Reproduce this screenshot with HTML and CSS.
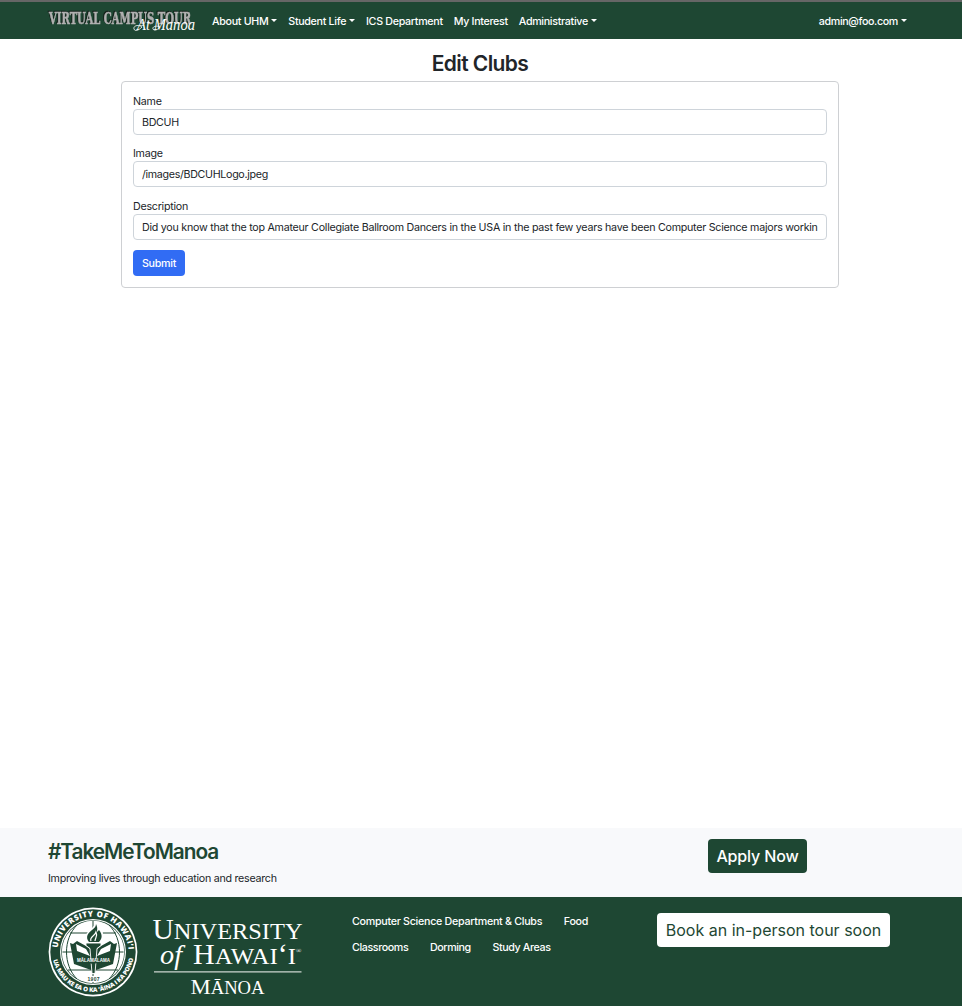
FILE: index.html
```html
<!DOCTYPE html>
<html lang="en">
<head>
<meta charset="utf-8">
<title>Edit Clubs</title>
<link rel="stylesheet" href="styles.css">
</head>
<body>
<header class="navbar">
  <svg class="brand" width="150" height="26" viewBox="0 0 150 26" role="img" aria-label="Virtual Campus Tour At Manoa">
    <text class="brand-block" x="1" y="15.6" textLength="142" lengthAdjust="spacingAndGlyphs">VIRTUAL CAMPUS TOUR</text>
    <text class="brand-script" x="89" y="22.3" textLength="58" lengthAdjust="spacingAndGlyphs">At Manoa</text>
    <path class="brand-swash" d="M94 19c-4-3-9-1-8 2s5 1 8-2M112 19c-4-2-8 0-7 2s4 1 6-1"/>
  </svg>
  <nav class="links">
    <a class="link caret">About UHM</a>
    <a class="link caret">Student Life</a>
    <a class="link">ICS Department</a>
    <a class="link">My Interest</a>
    <a class="link caret">Administrative</a>
  </nav>
  <a class="link caret account">admin@foo.com</a>
</header>
<main class="page">
  <h1 class="title">Edit Clubs</h1>
  <form class="card">
    <div class="field"><label class="label" for="name">Name</label><input class="input" id="name" value="BDCUH"></div>
    <div class="field"><label class="label" for="image">Image</label><input class="input" id="image" value="/images/BDCUHLogo.jpeg"></div>
    <div class="field"><label class="label" for="description">Description</label><input class="input long" id="description" value="Did you know that the top Amateur Collegiate Ballroom Dancers in the USA in the past few years have been Computer Science majors workin"></div>
    <button class="submit" type="button">Submit</button>
  </form>
</main>
<section class="promo">
  <div class="promo-copy">
    <h2 class="hashtag">#TakeMeToManoa</h2>
    <p class="tagline">Improving lives through education and research</p>
  </div>
  <a class="button apply">Apply Now</a>
</section>
<footer class="footer">
  <svg class="university" width="256" height="94" viewBox="0 0 256 94" role="img" aria-label="University of Hawaii Manoa">
    <defs>
      <path id="arc-top" d="M9.5 47A35.5 35.5 0 0 1 80.5 47"/>
      <path id="arc-bottom" d="M4.8 54A41 41 0 0 0 85.2 54"/>
    </defs>
    <circle cx="45" cy="47" r="44.4" fill="#fff"/>
    <circle cx="45" cy="47" r="42.7" fill="#1e4733"/>
    <circle cx="45" cy="47" r="33" fill="#fff"/>
    <circle cx="45" cy="47" r="31.8" fill="#1e4733"/>
    <circle cx="45" cy="47" r="31.2" fill="#fff"/>
    <path class="globe" d="M45 16v62M14.5 47h61M22 28h46M20 65h50M29 20c-14 14-14 40 0 54M61 20c14 14 14 40 0 54"/>
    <path d="M45.5 69L43 65 26 59 22 38 25 39 29 36 38 41 45.5 47 53 41 62 36 66 39 69 38 65 59 48 65Z" fill="#1e4733"/>
    <path d="M28 39l10 5 4 7-13-5ZM63 39l-10 5-4 7 13-5Z" fill="#fff"/>
    <path d="M38 38c-2-5 0-10 4-13 3-3 5-5 6-9 4 4 7 8 7 13 0 4-1 7-3 9Z" fill="#fff"/>
    <path d="M41 37c-4-5-1-9 3-12 2-2 4-3 4-6 2 4 1 6 1 8l2-2c4 5 3 9 0 12Z" fill="#1e4733"/>
    <path d="M43 36c-2-4 4-5 5-9 2 4-1 6-1 9" fill="none" stroke="#fff" stroke-width="1.2"/>
    <path d="M38 38h15v2.5l-4 3-2 25h-3l-2-25-4-3Z" fill="#1e4733" stroke="#fff" stroke-width=".9"/>
    <path d="M28 51l8 1 9 3 9-3 8-1v6l-8 0-9 2-9-2-8 0Z" fill="#1e4733"/>
    <text class="banner" x="29" y="56.5" textLength="33" lengthAdjust="spacingAndGlyphs">MĀLAMALAMA</text>
    <rect x="38" y="71" width="15" height="6" fill="#fff"/>
    <text class="year" x="39.5" y="76" textLength="12">1907</text>
    <text class="ring-top"><textPath href="#arc-top" startOffset="4" textLength="105" lengthAdjust="spacing">UNIVERSITY OF HAWAI‘I</textPath></text>
    <text class="ring-bottom"><textPath href="#arc-bottom" startOffset="1" textLength="112" lengthAdjust="spacing">UA MAU KE EA O KA ‘ĀINA I KA PONO</textPath></text>
    <g class="wordmark">
      <text x="104.5" y="33.5" textLength="150" lengthAdjust="spacingAndGlyphs"><tspan class="big">U</tspan><tspan class="small">NIVERSITY</tspan></text>
      <text class="of" x="112" y="58.5" textLength="22" lengthAdjust="spacingAndGlyphs">of</text>
      <text x="145" y="58.5" textLength="103" lengthAdjust="spacingAndGlyphs"><tspan class="big">H</tspan><tspan class="small">AWAI</tspan><tspan class="big">‘</tspan><tspan class="small">I</tspan></text>
      <text class="registered" x="248" y="48">®</text>
      <path d="M106 66.8h147.5" stroke="#cdd5d0" stroke-width="1.3"/>
      <text x="142.5" y="88.5" textLength="74" lengthAdjust="spacingAndGlyphs"><tspan class="city-big">M</tspan><tspan class="city-small">ĀNOA</tspan></text>
    </g>
  </svg>
  <nav class="footer-links">
    <div class="footer-row"><a class="link">Computer Science Department &amp; Clubs</a><a class="link">Food</a></div>
    <div class="footer-row places"><a class="link">Classrooms</a><a class="link">Dorming</a><a class="link">Study Areas</a></div>
  </nav>
  <a class="button book">Book an in-person tour soon</a>
</footer>
</body>
</html>
```
FILE: styles.css
```css
* { box-sizing: border-box; }
body {
  display: flex;
  flex-direction: column;
  height: 1006px;
  margin: 0;
  overflow: hidden;
  background: #fff;
  color: #212529;
  font: 400 10.7px/16px Inter, "Liberation Sans", sans-serif;
  letter-spacing: -.26px;
}
.navbar {
  display: flex;
  align-items: center;
  height: 39px;
  padding: 3px 55px 0 48px;
  border-top: 2px solid #666;
  background: #1e4733;
}
.brand { flex: none; margin-top: -2px; overflow: visible; }
.brand-block {
  font: 700 16px "DejaVu Serif", serif;
  letter-spacing: 0;
  fill: #b0b0b0;
  stroke: #b0b0b0;
  stroke-width: .6px;
  filter: drop-shadow(-1px -.5px 0 #15211b);
}
.brand-script { font: italic 400 17px "Liberation Serif", serif; letter-spacing: 0; fill: #fff; }
.brand-swash { fill: none; stroke: #fff; stroke-width: .8; }
.links { display: flex; gap: 10.9px; margin-left: 14px; }
.link { color: #fff; font-weight: 500; white-space: nowrap; letter-spacing: -.31px; }
.caret::after {
  content: "";
  display: inline-block;
  margin-left: 3px;
  vertical-align: 3px;
  border: 3.2px solid transparent;
  border-top-color: #fff;
  border-bottom: 0;
}
.account { margin-left: auto; letter-spacing: -.36px; }
.page { flex: 1; width: 718px; margin: 0 auto 0 121px; padding-top: 12px; }
.title { margin: 0 0 5px; font-size: 21px; line-height: 25px; font-weight: 600; text-align: center; letter-spacing: -.6px; }
.card { height: 207px; padding: 11px; border: 1px solid #ced0d3; border-radius: 4px; }
.field { height: 52.4px; }
.label { display: block; height: 16px; line-height: 18px; }
.input {
  display: block;
  width: 100%;
  height: 26px;
  padding: 1px 8px 0;
  border: 1px solid #ced4da;
  border-radius: 4px;
  background: #fff;
  color: #212529;
  font: inherit;
  letter-spacing: -.32px;
}
.long { letter-spacing: -.26px; }
.submit {
  display: block;
  width: 52px;
  height: 26px;
  padding: 1px 0 0;
  border: 0;
  border-radius: 4px;
  background: #316cf4;
  color: #fff;
  font: inherit;
  font-weight: 500;
  letter-spacing: -.3px;
}
.promo { display: flex; align-items: flex-start; height: 69px; padding: 11px 155px 0 48px; background: #f8f9fb; }
.hashtag { margin: 0 0 6px; color: #1e4733; font-size: 20.8px; line-height: 26px; font-weight: 600; letter-spacing: -1.02px; }
.tagline { margin: 0; }
.button {
  display: flex;
  align-items: center;
  justify-content: center;
  height: 34px;
  margin-left: auto;
  border-radius: 4px;
  font-size: 16px;
  white-space: nowrap;
  letter-spacing: 0;
}
.apply { width: 99px; background: #1e4733; color: #fff; font-weight: 500; letter-spacing: -.15px; }
.footer { display: flex; height: 109px; padding: 8px 72px 0 48px; background: #1e4733; }
.university { flex: none; letter-spacing: 0; }
.globe { fill: none; stroke: #1e4733; stroke-width: 1; }
.banner { font: 700 5px "Liberation Sans", sans-serif; fill: #fff; }
.year { font: 700 5px "Liberation Sans", sans-serif; fill: #1e4733; }
.ring-top { font: 800 7.8px "Open Sans", sans-serif; fill: #fff; }
.ring-bottom { font: 800 6.2px "Open Sans", sans-serif; fill: #fff; }
.wordmark { font-family: "Liberation Serif", serif; fill: #fff; }
.big { font-size: 29px; }
.small { font-size: 24px; }
.of { font-size: 27px; font-style: italic; }
.registered { font-size: 7px; }
.city-big { font-size: 22px; }
.city-small { font-size: 18px; }
.footer-links { display: flex; flex-direction: column; gap: 10px; margin: 9px 0 0 48px; }
.footer-row { display: flex; gap: 21.6px; }
.footer-row .link { letter-spacing: -.28px; }
.places .link { letter-spacing: -.39px; }
.book { width: 233px; margin-top: 8px; background: #fff; color: #1e4733; }
```
